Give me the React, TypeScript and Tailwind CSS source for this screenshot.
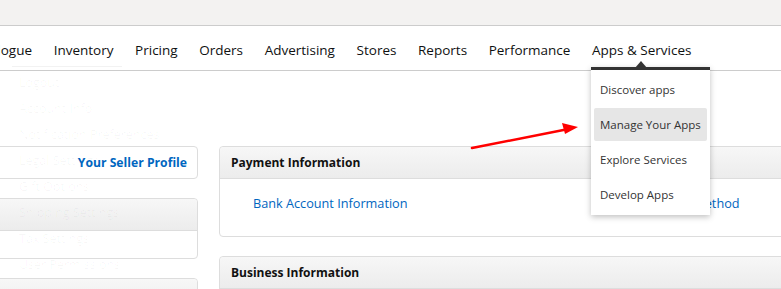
import React from "react";

const font = { fontFamily: '"Open Sans", "Noto Sans", sans-serif' };

function Card({ title, children, className = "" }: { title?: string; children?: React.ReactNode; className?: string }) {
  return (
    <div className={"rounded-[4px] border border-[#dddddd] bg-white " + className}>
      {title !== undefined && (
        <div className="h-[32px] flex items-center px-[11px] bg-gradient-to-b from-[#f7f7f7] to-[#ececec] border-b border-[#dddddd] rounded-t-[4px]">
          <span className="text-[12px] font-bold text-[#111111] pt-[1px]">{title}</span>
        </div>
      )}
      {children}
    </div>
  );
}

export default function App() {
  const nav = ["Catalogue", "Inventory", "Pricing", "Orders", "Advertising", "Stores", "Reports", "Performance", "Apps & Services"];
  const ghost = ["Logout", "Account Info", "Notification Preferences", "Legal Settings", "Gift Options", "Shipping Settings", "Tax Settings", "User Permissions"];
  return (
    <div className="relative w-[781px] h-[289px] overflow-hidden bg-white" style={font}>
      <div className="h-[26px] bg-[#f3f2f1] border-b border-[#cccccc]" />
      <div className="h-[45px] border-b border-[#cccccc] flex items-center pt-[4px] gap-[21.6px] ml-[-31px] text-[13.5px] text-[#0f1111]">
        {nav.map((n) => (
          <span key={n} className="whitespace-nowrap">{n}</span>
        ))}
      </div>
      <div className="flex gap-[21px] mt-[75px]">
        <div className="ml-[-20px] w-[218px] shrink-0 flex flex-col gap-[19px]">
          <Card className="h-[33px] flex items-center justify-end pr-[10px]">
            <span className="text-[12.2px] font-bold text-[#0066c0] pt-[1px]">Your Seller Profile</span>
          </Card>
          <Card title="" className="h-[61px]" />
          <Card title="" className="h-[40px]" />
        </div>
        <div className="w-[600px] shrink-0 flex flex-col gap-[19px]">
          <Card title="Payment Information" className="h-[91px]">
            <div className="flex pl-[33px] pt-[15px] text-[12.7px] text-[#0066c0] whitespace-nowrap">
              <span>Bank Account Information</span>
              <span className="ml-[237px]">Deposit Method</span>
            </div>
          </Card>
          <Card title="Business Information" className="h-[60px]" />
        </div>
      </div>

      {/* ghosted underlying menu */}
      <div className="absolute left-[19px] top-[75px] flex flex-col gap-[10px] text-[12.5px] text-black/[0.035] pointer-events-none">
        {ghost.map((g) => (
          <span key={g} className="leading-[16px] whitespace-nowrap">{g}</span>
        ))}
      </div>
      <div className="absolute left-[12px] top-[66px] w-[110px] h-[1px] bg-black/[0.05]" />

      {/* dropdown */}
      <div className="absolute left-[591px] top-[67px] w-[119px] bg-white shadow-[0_2px_6px_rgba(0,0,0,0.25)] text-[11.5px] text-[#333333] whitespace-nowrap">
        <div className="relative h-[3px] bg-[#333333]">
          <svg className="absolute left-[44px] -top-[6px]" width="12" height="7" viewBox="0 0 12 7">
            <polygon points="0,7 6,0 12,7" fill="#333333" />
          </svg>
        </div>
        <div className="px-[3px] pt-[2px] pb-[4px] flex flex-col">
          <div className="h-[36px] flex items-center px-[6px]">Discover apps</div>
          <div className="h-[33px] flex items-center px-[6px] bg-[#e6e6e6] rounded-[2px]">Manage Your Apps</div>
          <div className="h-[37px] flex items-center px-[6px]">Explore Services</div>
          <div className="h-[33px] flex items-center px-[6px]">Develop Apps</div>
        </div>
      </div>

      {/* red arrow annotation */}
      <svg className="absolute left-0 top-0 pointer-events-none" width="781" height="289">
        <line x1="472" y1="148" x2="566" y2="129.5" stroke="#ff0000" strokeWidth="2.5" strokeLinecap="round" />
        <polygon points="578,127 562,123 565,134" fill="#ff0000" />
      </svg>
    </div>
  );
}
